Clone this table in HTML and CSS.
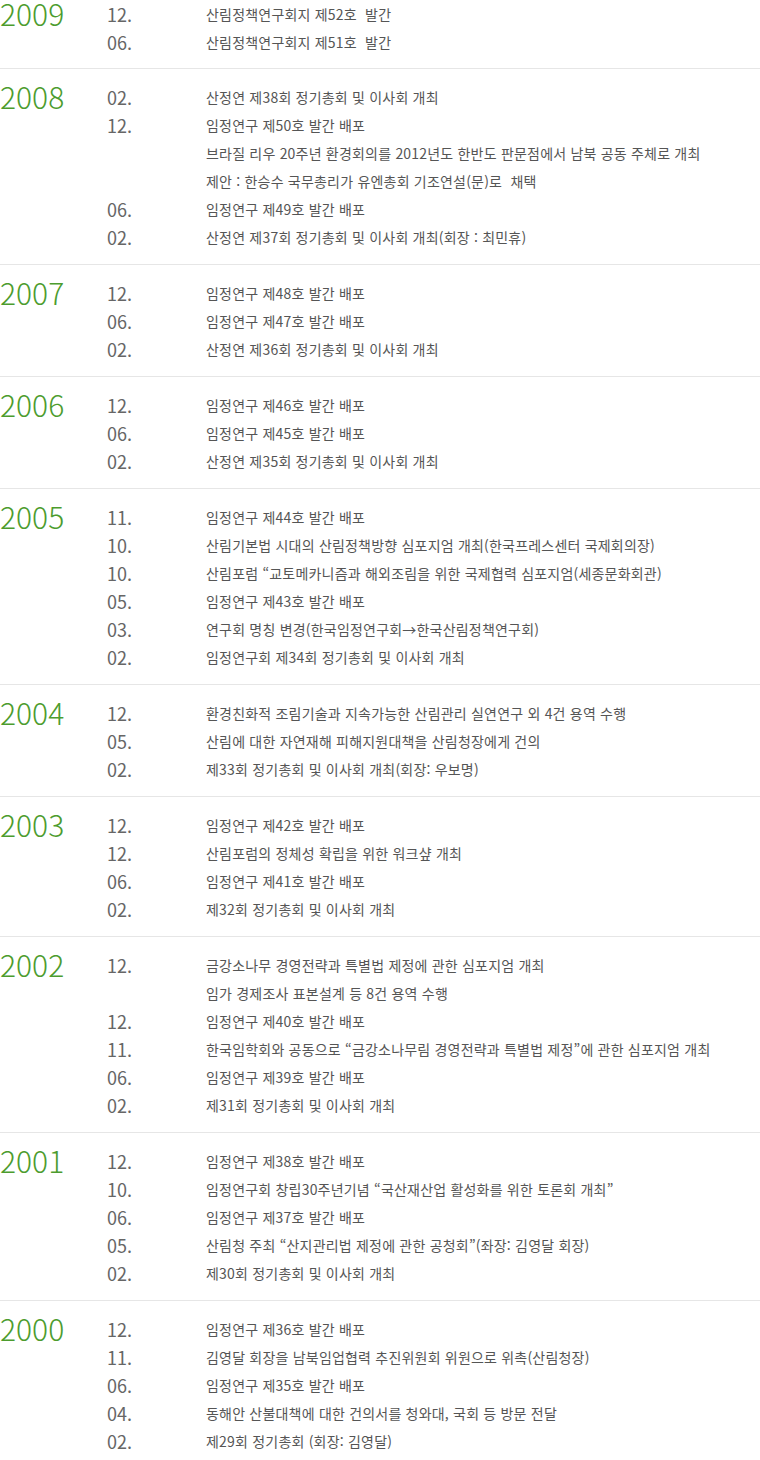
FILE: index.html
```html
<!DOCTYPE html>
<html lang="ko">
<head>
  <meta charset="utf-8">
  <title>연혁</title>
  <link rel="stylesheet" href="styles.css">
</head>
<body>
  <div class="history">
    <div class="year-block">
      <h3 class="year">2009</h3>
      <ul class="events">
        <li><span class="month">12.</span><span class="desc">산림정책연구회지 제52호&nbsp; 발간</span></li>
        <li><span class="month">06.</span><span class="desc">산림정책연구회지 제51호&nbsp; 발간</span></li>
      </ul>
    </div>
    <div class="year-block">
      <h3 class="year">2008</h3>
      <ul class="events">
        <li><span class="month">02.</span><span class="desc">산정연 제38회 정기총회 및 이사회 개최</span></li>
        <li><span class="month">12.</span><span class="desc">임정연구 제50호 발간 배포</span></li>
        <li><span class="month"></span><span class="desc">브라질 리우 20주년 환경회의를 2012년도 한반도 판문점에서 남북 공동 주체로 개최</span></li>
        <li><span class="month"></span><span class="desc">제안 : 한승수 국무총리가 유엔총회 기조연설(문)로&nbsp; 채택</span></li>
        <li><span class="month">06.</span><span class="desc">임정연구 제49호 발간 배포</span></li>
        <li><span class="month">02.</span><span class="desc">산정연 제37회 정기총회 및 이사회 개최(회장 : 최민휴)</span></li>
      </ul>
    </div>
    <div class="year-block">
      <h3 class="year">2007</h3>
      <ul class="events">
        <li><span class="month">12.</span><span class="desc">임정연구 제48호 발간 배포</span></li>
        <li><span class="month">06.</span><span class="desc">임정연구 제47호 발간 배포</span></li>
        <li><span class="month">02.</span><span class="desc">산정연 제36회 정기총회 및 이사회 개최</span></li>
      </ul>
    </div>
    <div class="year-block">
      <h3 class="year">2006</h3>
      <ul class="events">
        <li><span class="month">12.</span><span class="desc">임정연구 제46호 발간 배포</span></li>
        <li><span class="month">06.</span><span class="desc">임정연구 제45호 발간 배포</span></li>
        <li><span class="month">02.</span><span class="desc">산정연 제35회 정기총회 및 이사회 개최</span></li>
      </ul>
    </div>
    <div class="year-block">
      <h3 class="year">2005</h3>
      <ul class="events">
        <li><span class="month">11.</span><span class="desc">임정연구 제44호 발간 배포</span></li>
        <li><span class="month">10.</span><span class="desc">산림기본법 시대의 산림정책방향 심포지엄 개최(한국프레스센터 국제회의장)</span></li>
        <li><span class="month">10.</span><span class="desc">산림포럼 “교토메카니즘과 해외조림을 위한 국제협력 심포지엄(세종문화회관)</span></li>
        <li><span class="month">05.</span><span class="desc">임정연구 제43호 발간 배포</span></li>
        <li><span class="month">03.</span><span class="desc">연구회 명칭 변경(한국임정연구회→한국산림정책연구회)</span></li>
        <li><span class="month">02.</span><span class="desc">임정연구회 제34회 정기총회 및 이사회 개최</span></li>
      </ul>
    </div>
    <div class="year-block">
      <h3 class="year">2004</h3>
      <ul class="events">
        <li><span class="month">12.</span><span class="desc">환경친화적 조림기술과 지속가능한 산림관리 실연연구 외 4건 용역 수행</span></li>
        <li><span class="month">05.</span><span class="desc">산림에 대한 자연재해 피해지원대책을 산림청장에게 건의</span></li>
        <li><span class="month">02.</span><span class="desc">제33회 정기총회 및 이사회 개최(회장: 우보명)</span></li>
      </ul>
    </div>
    <div class="year-block">
      <h3 class="year">2003</h3>
      <ul class="events">
        <li><span class="month">12.</span><span class="desc">임정연구 제42호 발간 배포</span></li>
        <li><span class="month">12.</span><span class="desc">산림포럼의 정체성 확립을 위한 워크샾 개최</span></li>
        <li><span class="month">06.</span><span class="desc">임정연구 제41호 발간 배포</span></li>
        <li><span class="month">02.</span><span class="desc">제32회 정기총회 및 이사회 개최</span></li>
      </ul>
    </div>
    <div class="year-block">
      <h3 class="year">2002</h3>
      <ul class="events">
        <li><span class="month">12.</span><span class="desc">금강소나무 경영전략과 특별법 제정에 관한 심포지엄 개최</span></li>
        <li><span class="month"></span><span class="desc">임가 경제조사 표본설계 등 8건 용역 수행</span></li>
        <li><span class="month">12.</span><span class="desc">임정연구 제40호 발간 배포</span></li>
        <li><span class="month">11.</span><span class="desc">한국임학회와 공동으로 “금강소나무림 경영전략과 특별법 제정”에 관한 심포지엄 개최</span></li>
        <li><span class="month">06.</span><span class="desc">임정연구 제39호 발간 배포</span></li>
        <li><span class="month">02.</span><span class="desc">제31회 정기총회 및 이사회 개최</span></li>
      </ul>
    </div>
    <div class="year-block">
      <h3 class="year">2001</h3>
      <ul class="events">
        <li><span class="month">12.</span><span class="desc">임정연구 제38호 발간 배포</span></li>
        <li><span class="month">10.</span><span class="desc">임정연구회 창립30주년기념 “국산재산업 활성화를 위한 토론회 개최”</span></li>
        <li><span class="month">06.</span><span class="desc">임정연구 제37호 발간 배포</span></li>
        <li><span class="month">05.</span><span class="desc">산림청 주최 “산지관리법 제정에 관한 공청회”(좌장: 김영달 회장)</span></li>
        <li><span class="month">02.</span><span class="desc">제30회 정기총회 및 이사회 개최</span></li>
      </ul>
    </div>
    <div class="year-block">
      <h3 class="year">2000</h3>
      <ul class="events">
        <li><span class="month">12.</span><span class="desc">임정연구 제36호 발간 배포</span></li>
        <li><span class="month">11.</span><span class="desc">김영달 회장을 남북임업협력 추진위원회 위원으로 위촉(산림청장)</span></li>
        <li><span class="month">06.</span><span class="desc">임정연구 제35호 발간 배포</span></li>
        <li><span class="month">04.</span><span class="desc">동해안 산불대책에 대한 건의서를 청와대, 국회 등 방문 전달</span></li>
        <li><span class="month">02.</span><span class="desc">제29회 정기총회 (회장: 김영달)</span></li>
      </ul>
    </div>
  </div>
</body>
</html>
```

FILE: styles.css
```css
body {
  margin: 0;
  padding: 0;
  background-color: #fff;
  font-family: "Noto Sans CJK KR", "Noto Sans", sans-serif;
}

.history {
  width: 760px;
}

.year-block {
  display: flex;
  padding: 14px 0 13px;
  border-bottom: 1px solid #e6e6e6;
}

.year-block:first-child {
  padding-top: 0;
  padding-bottom: 12px;
}

.year-block:last-child {
  border-bottom: none;
}

.year {
  width: 107px;
  flex-shrink: 0;
  margin: 0;
  font-size: 30px;
  line-height: 26px;
  font-weight: 300;
  color: #4c9c2e;
}

.events {
  list-style: none;
  margin: 0;
  padding: 0;
}

.events li {
  display: flex;
  height: 28px;
  align-items: center;
}

.month {
  width: 99px;
  flex-shrink: 0;
  font-size: 18px;
  color: #666;
}

.desc {
  font-size: 14px;
  color: #555;
  letter-spacing: 0.2px;
  white-space: nowrap;
}
```
